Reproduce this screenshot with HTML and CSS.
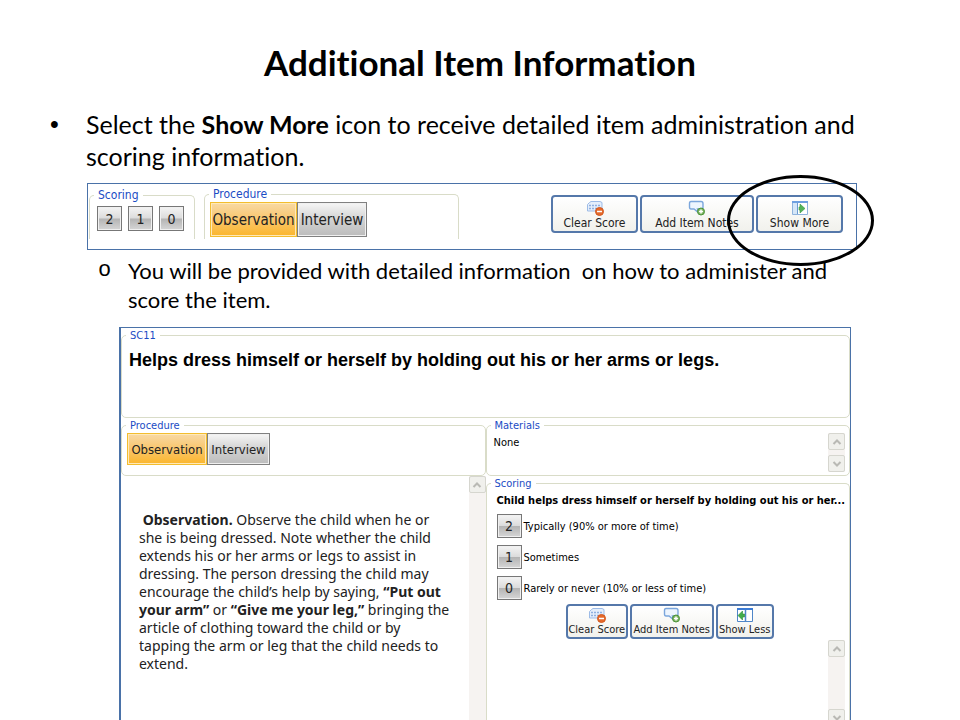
FILE: index.html
```
<!DOCTYPE html>
<html lang="en">
<head>
<meta charset="utf-8">
<title>Additional Item Information</title>
<link rel="stylesheet" href="styles.css">
</head>
<body>
<svg class="sprite" aria-hidden="true">
  <symbol id="icon-clear" viewBox="0 0 18 16">
    <path d="M3.500 2.500 5 1.500H14l2 1V11H1.500V4.500z" fill="#e4eefb" stroke="#9dbbe6"/>
    <path d="M3 5.500H15M3 8.500H13" stroke="#8fb0e0" stroke-dasharray="2 1" stroke-width="1.500" fill="none"/>
    <circle cx="13.500" cy="11.500" r="4" fill="#e5692b" stroke="#d2591f"/>
    <path d="M11 11.500h5" stroke="#fff" stroke-width="1.500"/>
  </symbol>
  <symbol id="icon-note" viewBox="0 0 18 16">
    <path d="M3 1.500H13Q15 1.500 15 3.500V7Q15 9 13 9H9.500L11 13 6 9H3Q1.500 9 1.500 7V3.500Q1.500 1.500 3 1.500z" fill="#edf5fe" stroke="#7ba6dc" stroke-width="1.400"/>
    <circle cx="13" cy="11.500" r="3.500" fill="#7db562" stroke="#4c9238"/>
    <path d="M13 9.500v4M11 11.500h4" stroke="#fff" stroke-width="1.500"/>
  </symbol>
  <symbol id="icon-more" viewBox="0 0 18 16">
    <path d="M1.500 1.500h15v13h-15z" fill="#fff" stroke="#8fb3dc"/>
    <path d="M1 2h16" stroke="#6d9fe0" stroke-width="2"/>
    <path d="M2 3h4v11H2z" fill="#d5e6f8"/>
    <path d="M6.500 3v11" stroke="#6b9bd0"/>
    <path d="M8 7h1V4l5 4.500-5 4.500v-3H8z" fill="#54b45a" stroke="#3a9a45" stroke-width=".6"/>
  </symbol>
  <symbol id="icon-less" viewBox="0 0 18 16">
    <path d="M1.500 1.500h15v13h-15z" fill="#fff" stroke="#4f86c8"/>
    <path d="M1 2h16" stroke="#3c7bd4" stroke-width="2"/>
    <path d="M9.500 3v11" stroke="#4f86c8" stroke-width="1.500"/>
    <path d="M8.500 7h-2V4L2 8.500 6.500 13v-3h2z" fill="#43ad4b" stroke="#2d8b38" stroke-width=".6"/>
  </symbol>
  <symbol id="icon-up" viewBox="0 0 10 8"><path d="M1.500 6 5 2.500 8.500 6" fill="none" stroke="#b9b9b4" stroke-width="2"/></symbol>
  <symbol id="icon-down" viewBox="0 0 10 8"><path d="M1.500 2 5 5.500 8.500 2" fill="none" stroke="#b9b9b4" stroke-width="2"/></symbol>
</svg>
<main class="slide">
  <h1>Additional Item Information</h1>
  <div class="point">
    <span class="bullet dot">•</span>
    <p>Select the <strong>Show More</strong> icon to receive detailed item administration and<br>scoring information.</p>
  </div>

  <section class="toolbar">
    <fieldset class="group open bar-scoring">
      <legend>Scoring</legend>
      <div class="buttons">
        <button class="score">2</button>
        <button class="score">1</button>
        <button class="score">0</button>
      </div>
    </fieldset>
    <fieldset class="group open bar-procedure">
      <legend>Procedure</legend>
      <div class="tabs"><button class="tab selected">Observation</button><button class="tab">Interview</button></div>
    </fieldset>
    <div class="actions">
      <button class="action"><svg><use href="#icon-clear"/></svg>Clear Score</button>
      <button class="action wide"><svg><use href="#icon-note"/></svg>Add Item Notes</button>
      <div class="highlighted">
        <button class="action"><svg><use href="#icon-more"/></svg>Show More</button>
        <span class="ring"></span>
      </div>
    </div>
  </section>

  <div class="point sub">
    <span class="bullet">o</span>
    <p>You will be provided with detailed information&nbsp; on how to administer and<br>score the item.</p>
  </div>

  <section class="panel">
    <fieldset class="group item">
      <legend>SC11</legend>
      <h2>Helps dress himself or herself by holding out his or her arms or legs.</h2>
    </fieldset>
    <div class="columns">
      <div class="column">
        <fieldset class="group short procedure">
          <legend>Procedure</legend>
          <div class="tabs"><button class="tab selected">Observation</button><button class="tab">Interview</button></div>
        </fieldset>
        <div class="reading">
          <p>&nbsp;<strong>Observation.</strong> Observe the child when he or<br>she is being dressed. Note whether the child<br>extends his or her arms or legs to assist in<br>dressing. The person dressing the child may<br>encourage the child’s help by saying, <strong>“Put out<br>your arm”</strong> or <strong>“Give me your leg,”</strong> bringing the<br>article of clothing toward the child or by<br>tapping the arm or leg that the child needs to<br>extend.</p>
          <div class="scroll"><button aria-label="Scroll up"><svg><use href="#icon-up"/></svg></button></div>
        </div>
      </div>
      <div class="column">
        <fieldset class="group short materials">
          <legend>Materials</legend>
          <div class="content">
            <p>None</p>
            <div class="scroll"><button aria-label="Scroll up"><svg><use href="#icon-up"/></svg></button><button aria-label="Scroll down"><svg><use href="#icon-down"/></svg></button></div>
          </div>
        </fieldset>
        <fieldset class="group scoring">
          <legend>Scoring</legend>
          <h3>Child helps dress himself or herself by holding out his or her...</h3>
          <div class="choice"><button class="score" id="s2">2</button><label for="s2">Typically (90% or more of time)</label></div>
          <div class="choice"><button class="score" id="s1">1</button><label for="s1">Sometimes</label></div>
          <div class="choice"><button class="score" id="s0">0</button><label for="s0">Rarely or never (10% or less of time)</label></div>
          <div class="actions">
            <button class="action"><svg><use href="#icon-clear"/></svg>Clear Score</button>
            <button class="action wide"><svg><use href="#icon-note"/></svg>Add Item Notes</button>
            <button class="action narrow"><svg><use href="#icon-less"/></svg>Show Less</button>
          </div>
          <div class="scroll"><button aria-label="Scroll up"><svg><use href="#icon-up"/></svg></button><button aria-label="Scroll down"><svg><use href="#icon-down"/></svg></button></div>
        </fieldset>
      </div>
    </div>
  </section>
</main>
</body>
</html>
```
FILE: styles.css
```
* { box-sizing: border-box; }
body { margin: 0; background: #fff; color: #000; }
h1, h2, h3, p { margin: 0; }
.sprite { position: absolute; width: 0; height: 0; }
button {
  margin: 0;
  padding: 0;
  font-family: "DejaVu Sans Condensed", "DejaVu Sans", sans-serif;
  color: #222;
  white-space: nowrap;
}

.slide {
  display: flex;
  flex-direction: column;
  height: 100vh;
  overflow: hidden;
  font-family: Lato, sans-serif;
  font-variant-ligatures: none;
}
h1 {
  padding-top: 38px;
  font-size: 35px;
  line-height: 48px;
  text-align: center;
}
.point {
  display: flex;
  margin-top: 22px;
  padding-left: 50px;
  font-size: 25px;
  line-height: 32px;
  white-space: nowrap;
}
.bullet { flex: none; width: 36px; }
.bullet.dot { font-family: "Liberation Sans", sans-serif; }
.point.sub {
  margin-top: 6px;
  padding-left: 98px;
  font-size: 22px;
  line-height: 29px;
}
.sub .bullet { width: 30px; font-family: "Liberation Mono", monospace; }

.toolbar {
  display: flex;
  flex: none;
  height: 67px;
  margin: 11px 103px 0 87px;
  padding: 3px 13px 10px 1px;
  border: 1px solid #4a72a8;
}
.group {
  min-width: 0;
  margin: 0;
  padding: 0;
  border: 1px solid #d9dcc8;
  border-radius: 5px;
  font-family: "DejaVu Sans Condensed", "DejaVu Sans", sans-serif;
  font-size: 11px;
}
legend {
  margin-left: 4px;
  padding: 0 4px;
  color: #1b4cc4;
  font-size: 11px;
  line-height: 15px;
}
.open {
  border-bottom: 0;
  border-radius: 5px 5px 0 0;
}
.open legend { font-size: 12px; }
.bar-scoring { width: 106px; margin-top: 1px; }
.buttons { display: flex; gap: 6px; padding: 3px 7px; }
.bar-procedure { width: 255px; margin-left: 9px; }
.tabs { display: flex; padding-left: 5px; }

.score {
  width: 25px;
  height: 25px;
  border: 1px solid #777;
  background: linear-gradient(#f4f4f4 0%, #dcdcdc 48%, #b4b4b4 52%, #d6d6d6 100%);
  box-shadow: inset 0 0 0 1px #f0f0f0;
  font-size: 14px;
}
.tab {
  height: 35px;
  width: 70px;
  border: 1px solid #808080;
  background: linear-gradient(#f6f6f6, #d2d2d2 50%, #bcbcbc);
  box-shadow: inset 0 0 0 1px #f0f0f0;
  font-size: 15px;
}
.tab.selected {
  width: 87px;
  border-color: #f3bd2e;
  background: linear-gradient(#f8d9a4, #f9c66c 50%, #fbb62c);
  box-shadow: inset 0 0 0 1px #ffe9b8;
}

.actions { display: flex; gap: 2px; }
.toolbar .actions { margin-left: auto; padding-top: 8px; }
.action {
  display: flex;
  flex-direction: column;
  align-items: center;
  justify-content: center;
  width: 87px;
  height: 38px;
  border: 2px solid #5578aa;
  border-radius: 4px;
  background: linear-gradient(#fff, #f1f1ec);
  font-size: 12px;
  line-height: 14px;
}
.action.wide { width: 114px; }
.action svg { width: 18px; height: 16px; }
.toolbar .action { padding-top: 2px; }
.highlighted { position: relative; }
.ring {
  position: absolute;
  left: -29px;
  top: -20px;
  width: 147px;
  height: 91px;
  border: 3px solid #000;
  border-radius: 50%;
}

.panel {
  display: flex;
  flex: 1;
  flex-direction: column;
  min-height: 0;
  margin: 13px 109px 0 119px;
  border: 1px solid #4a72a8;
  border-left-width: 2px;
  border-bottom: 0;
}
.item { flex: none; height: 90px; }
.item h2 {
  padding: 7px 0 0 7px;
  font: bold 18px/20px "Liberation Sans", sans-serif;
  white-space: nowrap;
}
.columns {
  display: grid;
  flex: 1;
  grid-template-columns: 1fr 1fr;
  min-height: 0;
}
.column { display: flex; flex-direction: column; min-width: 0; min-height: 0; }
.short { flex: none; height: 58px; }
.procedure .tab { width: 63px; height: 32px; font-size: 13px; }
.procedure .tab.selected { width: 80px; }
.reading {
  display: flex;
  flex: 1;
  justify-content: space-between;
  min-height: 0;
  padding-left: 18px;
  color: #222;
  font-family: "Noto Sans", sans-serif;
  font-size: 14px;
  line-height: 18px;
}
.reading p { padding-top: 35px; white-space: nowrap; }
.scroll {
  display: flex;
  flex: none;
  flex-direction: column;
  justify-content: space-between;
  width: 17px;
  background: #f6f3f1;
}
.scroll button {
  display: grid;
  place-items: center;
  width: 17px;
  height: 17px;
  border: 1px solid #d6d6cf;
  border-radius: 2px;
  background: #f0f0ec;
}
.scroll svg { width: 10px; height: 8px; }
.content { display: flex; justify-content: space-between; padding: 0 4px 0 7px; }
.content p { padding-top: 2px; line-height: 16px; }
.content .scroll { height: 39px; }
.scoring {
  flex: none;
  height: 260px;
  border-bottom: 0;
}
.scoring h3 {
  padding: 2px 0 5px 10px;
  font-size: 11px;
  line-height: 16px;
  white-space: nowrap;
}
.choice {
  display: flex;
  align-items: center;
  gap: 2px;
  height: 24px;
  margin: 0 0 7px 10px;
}
.choice .score { height: 24px; }
.scoring .actions { justify-content: center; margin-top: -3px; padding-left: 4px; }
.scoring .action { width: 62px; height: 35px; font-size: 11px; line-height: 13px; }
.scoring .action.wide { width: 84px; }
.scoring .action.narrow { width: 58px; }
.scoring .scroll { height: 86px; margin: 1px 4px 0 auto; }
```
